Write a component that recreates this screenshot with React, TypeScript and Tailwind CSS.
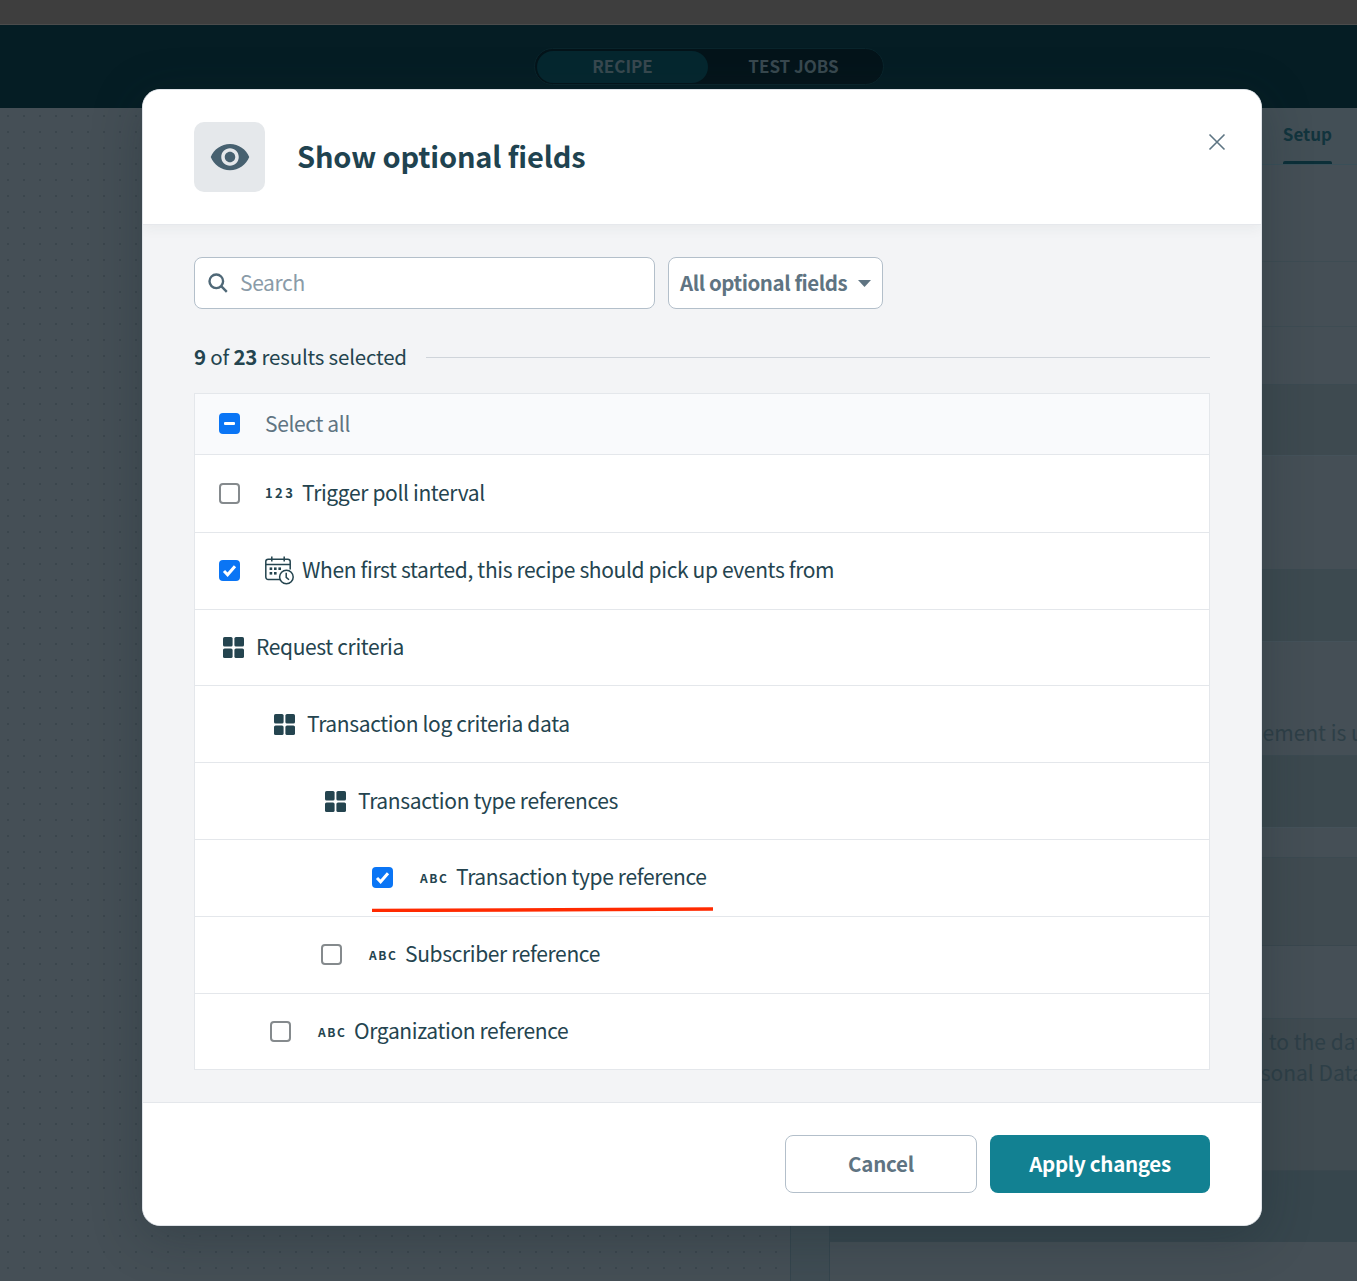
import React from "react";

const F = "font-['Noto_Sans_CJK_SC','Liberation_Sans',sans-serif]";

function GridIcon() {
  return (
    <svg width="21" height="21" viewBox="0 0 21 21" className="shrink-0" fill="#24444f">
      <rect x="0" y="0" width="9.6" height="9.6" rx="1.6" />
      <rect x="11.4" y="0" width="9.6" height="9.6" rx="1.6" />
      <rect x="0" y="11.4" width="9.6" height="9.6" rx="1.6" />
      <rect x="11.4" y="11.4" width="9.6" height="9.6" rx="1.6" />
    </svg>
  );
}

function Box({ state }: { state: "on" | "off" | "some" }) {
  if (state === "off") {
    return <span className="block shrink-0 w-[21px] h-[21px] rounded-[4px] border-2 border-[#858a8d] bg-white" />;
  }
  return (
    <span className="flex shrink-0 items-center justify-center w-[21px] h-[21px] rounded-[4px] bg-[#0a75f5]">
      {state === "on" ? (
        <svg width="15" height="13" viewBox="0 0 15 13" fill="none">
          <path d="M2 7l3.6 3.8L13 2.2" stroke="#fff" strokeWidth="3" />
        </svg>
      ) : (
        <span className="block w-[11px] h-[3px] bg-white rounded-[1px]" />
      )}
    </span>
  );
}

function Calendar() {
  return (
    <svg width="29" height="29" viewBox="0 0 29 29" fill="none" stroke="#24444f" strokeWidth="1.5" className="shrink-0">
      <path d="M15 23.5H3.2A2.4 2.4 0 0 1 .8 21V5.6a2.4 2.4 0 0 1 2.4-2.4h19.6a2.4 2.4 0 0 1 2.4 2.4v8" />
      <path d="M.8 8.6h24.4M6.8 .6v5M19.2 .6v5" />
      <g fill="#24444f" stroke="none">
        <rect x="4.6" y="11.4" width="2.6" height="2.6" />
        <rect x="9" y="11.4" width="2.6" height="2.6" />
        <rect x="13.4" y="11.4" width="2.6" height="2.6" />
        <rect x="4.6" y="16" width="2.6" height="2.6" />
        <rect x="9" y="16" width="2.6" height="2.6" />
      </g>
      <circle cx="21.4" cy="21" r="6.8" fill="#fff" />
      <path d="M21.2 16.8v4.6l2.8 2.4" />
    </svg>
  );
}

function Tag({ children, w }: { children: React.ReactNode; w: string }) {
  return (
    <span className={`shrink-0 leading-[16px] font-bold text-[#24444f] ${w}`}>{children}</span>
  );
}

function Row({ h, pl, gap, children }: { h: string; pl: string; gap: string; children: React.ReactNode }) {
  return (
    <div className={`relative flex items-center border-b border-[#e4e7eb] bg-white ${h} ${pl} ${gap}`}>{children}</div>
  );
}

function Label({ children }: { children: React.ReactNode }) {
  return <span className="text-[21px] leading-[30px] tracking-[-0.36px] pb-[3px] text-[#24444f] whitespace-nowrap">{children}</span>;
}

export default function App() {
  return (
    <div className={`relative w-[1357px] h-[1281px] overflow-hidden bg-[#454f56] ${F}`}>
      <div className="h-[25px] bg-[#3e3e3e] border-b border-[#4c4c4c]" />
      <div className="h-[83px] bg-[#051d24] flex items-center justify-center">
        <div className="flex items-center w-[350px] h-[37px] ml-[61px] p-[2px] rounded-full border border-[#0a252c] bg-[#04141a] text-[17px] leading-[24px] font-bold text-[#394950]">
          <span className="flex items-center justify-center w-[171px] h-[32px] pb-[2px] rounded-full bg-[#05272f]">RECIPE</span>
          <span className="flex-1 text-center pb-[2px] pr-[2px]">TEST JOBS</span>
        </div>
      </div>

      <div className="flex h-[1173px]">
        <div className="w-[790px] shrink-0 bg-[#454f56] bg-[radial-gradient(#3b464d_1px,transparent_1.2px)] bg-[length:16px_16px]" />
        <div className="w-[40px] shrink-0 bg-[#3f4c53] border-x border-[#35454d]" />
        <div className="flex-1 flex flex-col min-w-0 text-[#2e3f47] text-[21px] leading-[30px]">
          <div className="h-[57px] flex justify-end items-start pr-[25px] border-b border-[#3a4f58] bg-[#434f56]">
            <div className="relative h-[56px] pt-[13px] text-[17px] leading-[26px] font-bold text-[#12343d]">
              Setup
              <span className="absolute left-0 right-0 bottom-0 h-[3px] rounded-t-[2px] bg-[#0c2f38]" />
            </div>
          </div>
          <div className="h-[97px] border-b border-[#3e4c53]" />
          <div className="h-[65px] border-b border-[#3e4c53]" />
          <div className="h-[58px] border-b border-[#3c4a51]" />
          <div className="h-[71px] bg-[#3e4a50] border-b border-[#45525a]" />
          <div className="h-[114px] border-b border-[#3c4a51]" />
          <div className="h-[72px] bg-[#3d4a50] border-b border-[#45525a]" />
          <div className="h-[114px] border-b border-[#3c4a51] pt-[75px] pl-[415px] whitespace-nowrap">element is used</div>
          <div className="h-[72px] bg-[#3c494f] border-b border-[#45525a]" />
          <div className="h-[30px] border-b border-[#3c4a51]" />
          <div className="h-[88px] bg-[#404b51] border-b border-[#3a474e]" />
          <div className="h-[73px] border-b border-[#3c4a51]" />
          <div className="h-[152px] bg-[#404b51] border-b border-[#3a474e] pt-[7px] whitespace-nowrap">
            <div className="pl-[352px]">mapped to the data for</div>
            <div className="mt-[1px] pl-[374px]">of Personal Data</div>
          </div>
          <div className="h-[71px] bg-[#37464d]" />
          <div className="flex-1" />
        </div>
      </div>

      <div className="absolute left-[142px] top-[89px] w-[1120px] h-[1137px] flex flex-col rounded-[18px] bg-white border border-[#dfe3e8] overflow-hidden shadow-[0_10px_50px_rgba(20,35,42,0.3)]">
        <div className="relative z-10 h-[135px] shrink-0 flex items-center pl-[51px] bg-white border-b border-[#e6e8ec] shadow-[0_4px_12px_rgba(30,50,60,0.05)]">
          <div className="flex items-center justify-center w-[71px] h-[70px] rounded-[10px] bg-[#e5e8eb]">
            <svg width="42" height="42" viewBox="0 0 24 24" fill="#476170">
              <path d="M12 4.5C7 4.5 2.73 7.61 1 12c1.73 4.39 6 7.5 11 7.5s9.27-3.11 11-7.5c-1.73-4.39-6-7.5-11-7.5zM12 17c-2.76 0-5-2.24-5-5s2.24-5 5-5 5 2.24 5 5-2.24 5-5 5zm0-8c-1.66 0-3 1.34-3 3s1.34 3 3 3 3-1.34 3-3-1.34-3-3-3z" />
            </svg>
          </div>
          <h1 className="ml-[32px] pb-[4px] text-[29px] leading-[40px] tracking-[-0.15px] font-bold text-[#1f4350]">Show optional fields</h1>
          <svg width="18" height="18" viewBox="0 0 18 18" fill="none" stroke="#5e7583" strokeWidth="1.6" className="absolute right-[35px] top-[43px]">
            <path d="M1.5 1.5l15 15M16.500 1.500l-15 15" />
          </svg>
        </div>

        <div className="flex-1 flex flex-col bg-[#f3f4f6] px-[51px] pt-[32px]">
          <div className="flex gap-[13px] h-[52px]">
            <div className="flex items-center w-[461px] pl-[13px] rounded-[8px] border border-[#b3bfca] bg-white">
              <svg width="20" height="20" viewBox="0 0 20 20" fill="none" stroke="#4f6877" strokeWidth="2.4">
                <circle cx="8.300" cy="8.300" r="6.800" />
                <path d="M13.200 13.200l5.600 5.600" />
              </svg>
              <span className="ml-[12px] pb-[2px] text-[21px] leading-[30px] tracking-[-0.36px] text-[#8a9ba8]">Search</span>
            </div>
            <div className="flex items-center w-[215px] pl-[11px] rounded-[8px] border border-[#b3bfca] bg-white">
              <span className="pb-[2px] text-[20.5px] leading-[30px] tracking-[-0.45px] font-semibold text-[#5f7482] whitespace-nowrap">All optional fields</span>
              <svg width="13" height="7" viewBox="0 0 13 7" fill="#5f7482" className="ml-[11px]">
                <path d="M0 0h13L6.500 7z" />
              </svg>
            </div>
          </div>

          <div className="flex items-center h-[30px] mt-[33px]">
            <span className="pb-[2px] text-[20.5px] leading-[30px] tracking-[-0.2px] text-[#24444f] whitespace-nowrap">
              <span className="font-semibold">9</span> of <span className="font-semibold">23</span> results selected
            </span>
            <span className="flex-1 ml-[19px] h-px bg-[#cfd4da]" />
          </div>

          <div className="mt-[21px] border border-[#e4e7eb] border-b-0">
            <div className="flex items-center h-[61px] pl-[24px] pb-[1px] gap-[25px] bg-[#f9fafc] border-b border-[#e4e7eb]">
              <Box state="some" />
              <span className="pb-[2px] text-[21px] leading-[30px] tracking-[-0.36px] text-[#5f7482]">Select all</span>
            </div>
            <Row h="h-[78px] pb-[1px]" pl="pl-[24px]" gap="gap-[8px]">
              <Box state="off" />
              <Tag w="ml-[17px] w-[29px] text-[13px] tracking-[2.4px]">123</Tag>
              <Label>Trigger poll interval</Label>
            </Row>
            <Row h="h-[77px] pb-[1px]" pl="pl-[24px]" gap="gap-[9px]">
              <Box state="on" />
              <span className="ml-[16px] -mr-[1px] flex"><Calendar /></span>
              <Label>When first started, this recipe should pick up events from</Label>
            </Row>
            <Row h="h-[76px]" pl="pl-[28px]" gap="gap-[12px]">
              <GridIcon />
              <Label>Request criteria</Label>
            </Row>
            <Row h="h-[77px]" pl="pl-[79px]" gap="gap-[12px]">
              <GridIcon />
              <Label>Transaction log criteria data</Label>
            </Row>
            <Row h="h-[77px]" pl="pl-[130px]" gap="gap-[12px]">
              <GridIcon />
              <Label>Transaction type references</Label>
            </Row>
            <Row h="h-[77px] pb-[1px]" pl="pl-[177px]" gap="gap-[8px]">
              <Box state="on" />
              <Tag w="ml-[19px] w-[28px] text-[12px] tracking-[1.6px]">ABC</Tag>
              <Label>Transaction type reference</Label>
              <svg width="342" height="6" viewBox="0 0 342 6" className="absolute left-[177px] top-[66px]">
                <path d="M0 4.500L341 3" stroke="#ff2a00" strokeWidth="3.500" />
              </svg>
            </Row>
            <Row h="h-[77px] pb-[1px]" pl="pl-[126px]" gap="gap-[8px]">
              <Box state="off" />
              <Tag w="ml-[19px] w-[28px] text-[12px] tracking-[1.6px]">ABC</Tag>
              <Label>Subscriber reference</Label>
            </Row>
            <Row h="h-[76px]" pl="pl-[75px]" gap="gap-[8px]">
              <Box state="off" />
              <Tag w="ml-[19px] w-[28px] text-[12px] tracking-[1.6px]">ABC</Tag>
              <Label>Organization reference</Label>
            </Row>
          </div>
        </div>

        <div className="h-[123px] shrink-0 flex justify-end items-start gap-[13px] pt-[32px] pr-[51px] bg-white border-t border-[#e4e7eb]">
          <button className="w-[192px] h-[58px] pb-[2px] rounded-[8px] border border-[#b3bfca] bg-white text-[20.5px] leading-[30px] tracking-[-0.2px] font-semibold text-[#5f7482]">Cancel</button>
          <button className="w-[220px] h-[58px] pb-[2px] rounded-[8px] bg-[#128192] text-[20.5px] leading-[30px] tracking-[-0.3px] font-semibold text-white">Apply changes</button>
        </div>
      </div>
    </div>
  );
}
